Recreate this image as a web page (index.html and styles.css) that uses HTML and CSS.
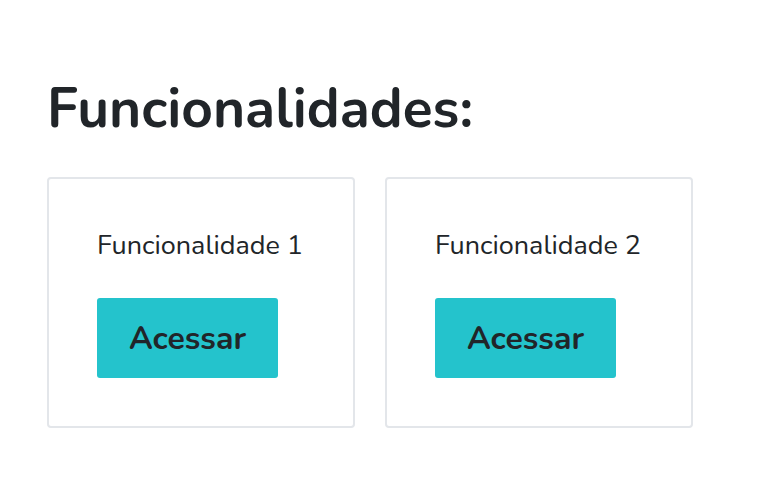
FILE: index.html
```html
<!DOCTYPE html>
<html lang="pt">
<head>
    <meta charset="UTF-8">
    <title>Funcionalidades</title>
    <link rel="stylesheet" href="styles.css">
</head>
<body>

<div class="page">
    <h1 class="page_title">Funcionalidades:</h1>

    <div class="cards">
        <div class="card">
            <p class="card_text">Funcionalidade 1</p>
            <button class="card_button">Acessar</button>
        </div>
        <div class="card">
            <p class="card_text">Funcionalidade 2</p>
            <button class="card_button">Acessar</button>
        </div>
    </div>
</div>

</body>
</html>
```

FILE: styles.css
```css
body {
    margin: 0;
    font-family: "Nunito", "Lato", "Noto Sans", sans-serif;
    color: #212529;
    background: #fff;
}

.page {
    padding: 76px 0 0 47px;
}

.page_title {
    margin: 0 0 35px 0;
    font-size: 55px;
    font-weight: 700;
    line-height: 1.2;
}

.cards {
    display: flex;
    gap: 30px;
}

.card {
    box-sizing: border-box;
    width: 308px;
    height: 251px;
    padding: 51px 48px 0 48px;
    border: 2px solid #e3e6ea;
    border-radius: 4px;
}

.card_text {
    margin: 0 0 36px 0;
    font-size: 27px;
    line-height: 1.2;
}

.card_button {
    box-sizing: border-box;
    width: 181px;
    height: 80px;
    border: none;
    border-radius: 3px;
    background: #24c3cc;
    color: #212529;
    font-family: inherit;
    font-size: 32px;
    font-weight: 700;
}
```
